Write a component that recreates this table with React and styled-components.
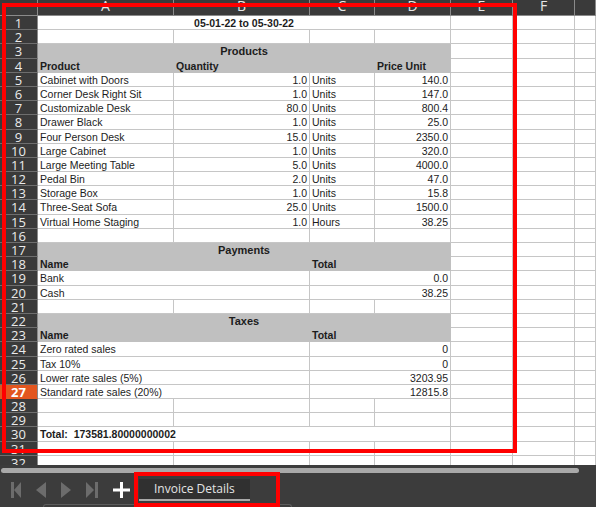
import React from "react";
import styled, { createGlobalStyle } from "styled-components";

const Global = createGlobalStyle`
  html, body { margin: 0; padding: 0; background: #3c3c3c; }
  body { width: 596px; height: 507px; overflow: hidden; }
  #root { position: relative; width: 596px; height: 507px; }
`;

const Window = styled.div`
  position: relative;
  display: flex;
  flex-direction: column;
  width: 596px;
  height: 507px;
  background: #3c3c3c;
  overflow: hidden;
`;

const Sheet = styled.div`
  display: grid;
  grid-template-columns: 38px 136px 136px 65px 76px 62px 62px 1fr;
  grid-template-rows: 16px;
  grid-auto-rows: 14.2px;
  height: 465px;
  flex: none;
  overflow: hidden;
  background: #ffffff;
`;

const Corner = styled.div`
  background: #3a3a3a;
  border-right: 1px solid #8a8a8a;
  border-bottom: 1px solid #8a8a8a;
`;

const ColHead = styled.div`
  box-sizing: border-box;
  background: #3a3a3a;
  border-right: 1px solid #8a8a8a;
  border-bottom: 1px solid #8a8a8a;
  color: #e6e6e6;
  font-family: "Open Sans", "DejaVu Sans", sans-serif;
  font-size: 14px;
  line-height: 11px;
  text-align: center;
  overflow: hidden;
`;

const RowHead = styled.div`
  box-sizing: border-box;
  background: ${(p) => (p.$active ? "#e3561f" : "#3a3a3a")};
  border-right: 1px solid #8a8a8a;
  border-bottom: 1px solid ${(p) => (p.$active ? "#e3561f" : "#6e6e6e")};
  color: ${(p) => (p.$active ? "#ffffff" : "#ebebeb")};
  font-family: "Open Sans", "DejaVu Sans", sans-serif;
  font-weight: ${(p) => (p.$active ? 700 : 400)};
  font-size: 13px;
  line-height: 11px;
  padding-top: 2px;
  text-align: center;
  overflow: hidden;
`;

const Cell = styled.div`
  box-sizing: border-box;
  grid-column: span ${(p) => p.$span || 1};
  background: ${(p) => (p.$gray ? "#c0c0c0" : "#ffffff")};
  border-right: 1px solid ${(p) => (p.$gray ? "#c0c0c0" : "#c6c6c6")};
  border-bottom: 1px solid ${(p) => (p.$gray ? "#c0c0c0" : "#c6c6c6")};
  color: #1c1c1c;
  font-family: "Liberation Sans", Arial, sans-serif;
  font-size: ${(p) => (p.$title ? "11px" : "10.5px")};
  font-weight: ${(p) => (p.$bold ? 700 : 400)};
  line-height: 12px;
  padding: 1px 2px 0 2px;
  text-align: ${(p) => p.$align || "left"};
  white-space: pre;
  overflow: hidden;
`;

const Scroll = styled.div`
  height: 10px;
  flex: none;
  display: flex;
  align-items: center;
  padding-left: 1px;
`;

const ScrollThumb = styled.div`
  width: 578px;
  height: 5px;
  border-radius: 3px;
  background: #a9a9a9;
`;

const TabBar = styled.div`
  height: 29px;
  flex: none;
  display: flex;
  align-items: center;
  padding-left: 11px;
`;

const NavGroup = styled.div`
  display: flex;
  align-items: center;
  gap: 15px;
`;

const AddButton = styled.div`
  display: flex;
  margin-left: 15px;
`;

const Tab = styled.div`
  box-sizing: border-box;
  margin-left: 9px;
  width: 111px;
  height: 22px;
  background: #303030;
  color: #e4e4e4;
  font-family: "Open Sans", "Noto Sans", sans-serif;
  font-size: 12px;
  line-height: 20px;
  padding-left: 15px;
  border-bottom: 2px solid #a9a9a9;
  white-space: nowrap;
`;

const Status = styled.div`
  flex: 1;
  display: flex;
  padding-left: 43px;
`;

const StatusBox = styled.div`
  width: 247px;
  border: 1px solid #5c5c5c;
  border-bottom: none;
  border-radius: 4px 4px 0 0;
`;

const Highlight = styled.div`
  position: absolute;
  box-sizing: border-box;
  border: 4px solid #ff0000;
  left: ${(p) => p.$x}px;
  top: ${(p) => p.$y}px;
  width: ${(p) => p.$w}px;
  height: ${(p) => p.$h}px;
  pointer-events: none;
`;

const Icon = ({ kind }) => {
  const c = "#6c6c6c";
  if (kind === "first")
    return (
      <svg width="10" height="16" viewBox="0 0 10 16">
        <rect x="0" y="0" width="3" height="16" fill={c} />
        <polygon points="10,0 3,8 10,16" fill={c} />
      </svg>
    );
  if (kind === "prev")
    return (
      <svg width="10" height="16" viewBox="0 0 10 16">
        <polygon points="10,0 0,8 10,16" fill={c} />
      </svg>
    );
  if (kind === "next")
    return (
      <svg width="10" height="16" viewBox="0 0 10 16">
        <polygon points="0,0 10,8 0,16" fill={c} />
      </svg>
    );
  return (
    <svg width="12" height="16" viewBox="0 0 12 16">
      <polygon points="0,0 8,8 0,16" fill={c} />
      <rect x="9" y="0" width="3" height="16" fill={c} />
    </svg>
  );
};

const Plus = () => (
  <svg width="17" height="16" viewBox="0 0 17 16">
    <rect x="0" y="6.5" width="17" height="3" fill="#ffffff" />
    <rect x="7" y="0" width="3" height="16" fill="#ffffff" />
  </svg>
);

const E = (n = 1) => Array.from({ length: n }, () => ({}));

const products = [
  ["Cabinet with Doors", "1.0", "Units", "140.0"],
  ["Corner Desk Right Sit", "1.0", "Units", "147.0"],
  ["Customizable Desk", "80.0", "Units", "800.4"],
  ["Drawer Black", "1.0", "Units", "25.0"],
  ["Four Person Desk", "15.0", "Units", "2350.0"],
  ["Large Cabinet", "1.0", "Units", "320.0"],
  ["Large Meeting Table", "5.0", "Units", "4000.0"],
  ["Pedal Bin", "2.0", "Units", "47.0"],
  ["Storage Box", "1.0", "Units", "15.8"],
  ["Three-Seat Sofa", "25.0", "Units", "1500.0"],
  ["Virtual Home Staging", "1.0", "Hours", "38.25"],
];

const title = (t) => ({ span: 4, text: t, gray: true, bold: true, title: true, align: "center" });
const headPair = [
  { span: 2, text: "Name", gray: true, bold: true },
  { span: 2, text: "Total", gray: true, bold: true },
];
const pair = (a, b) => [{ span: 2, text: a }, { span: 2, text: b, align: "right" }];

const rows = [
  [{ span: 4, text: "05-01-22 to 05-30-22", bold: true, align: "center" }, ...E(3)],
  E(7),
  [title("Products"), ...E(3)],
  [
    { text: "Product", gray: true, bold: true },
    { text: "Quantity", gray: true, bold: true },
    { text: "", gray: true },
    { text: "Price Unit", gray: true, bold: true },
    ...E(3),
  ],
  ...products.map(([a, b, c, d]) => [
    { text: a },
    { text: b, align: "right" },
    { text: c },
    { text: d, align: "right" },
    ...E(3),
  ]),
  E(7),
  [title("Payments"), ...E(3)],
  [...headPair, ...E(3)],
  [...pair("Bank", "0.0"), ...E(3)],
  [...pair("Cash", "38.25"), ...E(3)],
  E(7),
  [title("Taxes"), ...E(3)],
  [...headPair, ...E(3)],
  [...pair("Zero rated sales", "0"), ...E(3)],
  [...pair("Tax 10%", "0"), ...E(3)],
  [...pair("Lower rate sales (5%)", "3203.95"), ...E(3)],
  [...pair("Standard rate sales (20%)", "12815.8"), ...E(3)],
  E(7),
  E(7),
  [{ span: 4, text: "Total:  173581.80000000002", bold: true }, ...E(3)],
  E(7),
  E(7),
];

export default function App() {
  return (
    <Window>
      <Global />
      <Sheet>
        <Corner />
        {["A", "B", "C", "D", "E", "F", ""].map((l, i) => (
          <ColHead key={i}>{l}</ColHead>
        ))}
        {rows.map((cells, r) => (
          <React.Fragment key={r}>
            <RowHead $active={r + 1 === 27}>{r + 1}</RowHead>
            {cells.map((c, i) => (
              <Cell
                key={i}
                $span={c.span}
                $gray={c.gray}
                $bold={c.bold}
                $title={c.title}
                $align={c.align}
              >
                {c.text || ""}
              </Cell>
            ))}
          </React.Fragment>
        ))}
      </Sheet>
      <Scroll>
        <ScrollThumb />
      </Scroll>
      <TabBar>
        <NavGroup>
          <Icon kind="first" />
          <Icon kind="prev" />
          <Icon kind="next" />
          <Icon kind="last" />
        </NavGroup>
        <AddButton>
          <Plus />
        </AddButton>
        <Tab>Invoice Details</Tab>
      </TabBar>
      <Status>
        <StatusBox />
      </Status>
      <Highlight $x={2} $y={3} $w={515} $h={450} />
      <Highlight $x={134} $y={472} $w={146} $h={35} />
    </Window>
  );
}
